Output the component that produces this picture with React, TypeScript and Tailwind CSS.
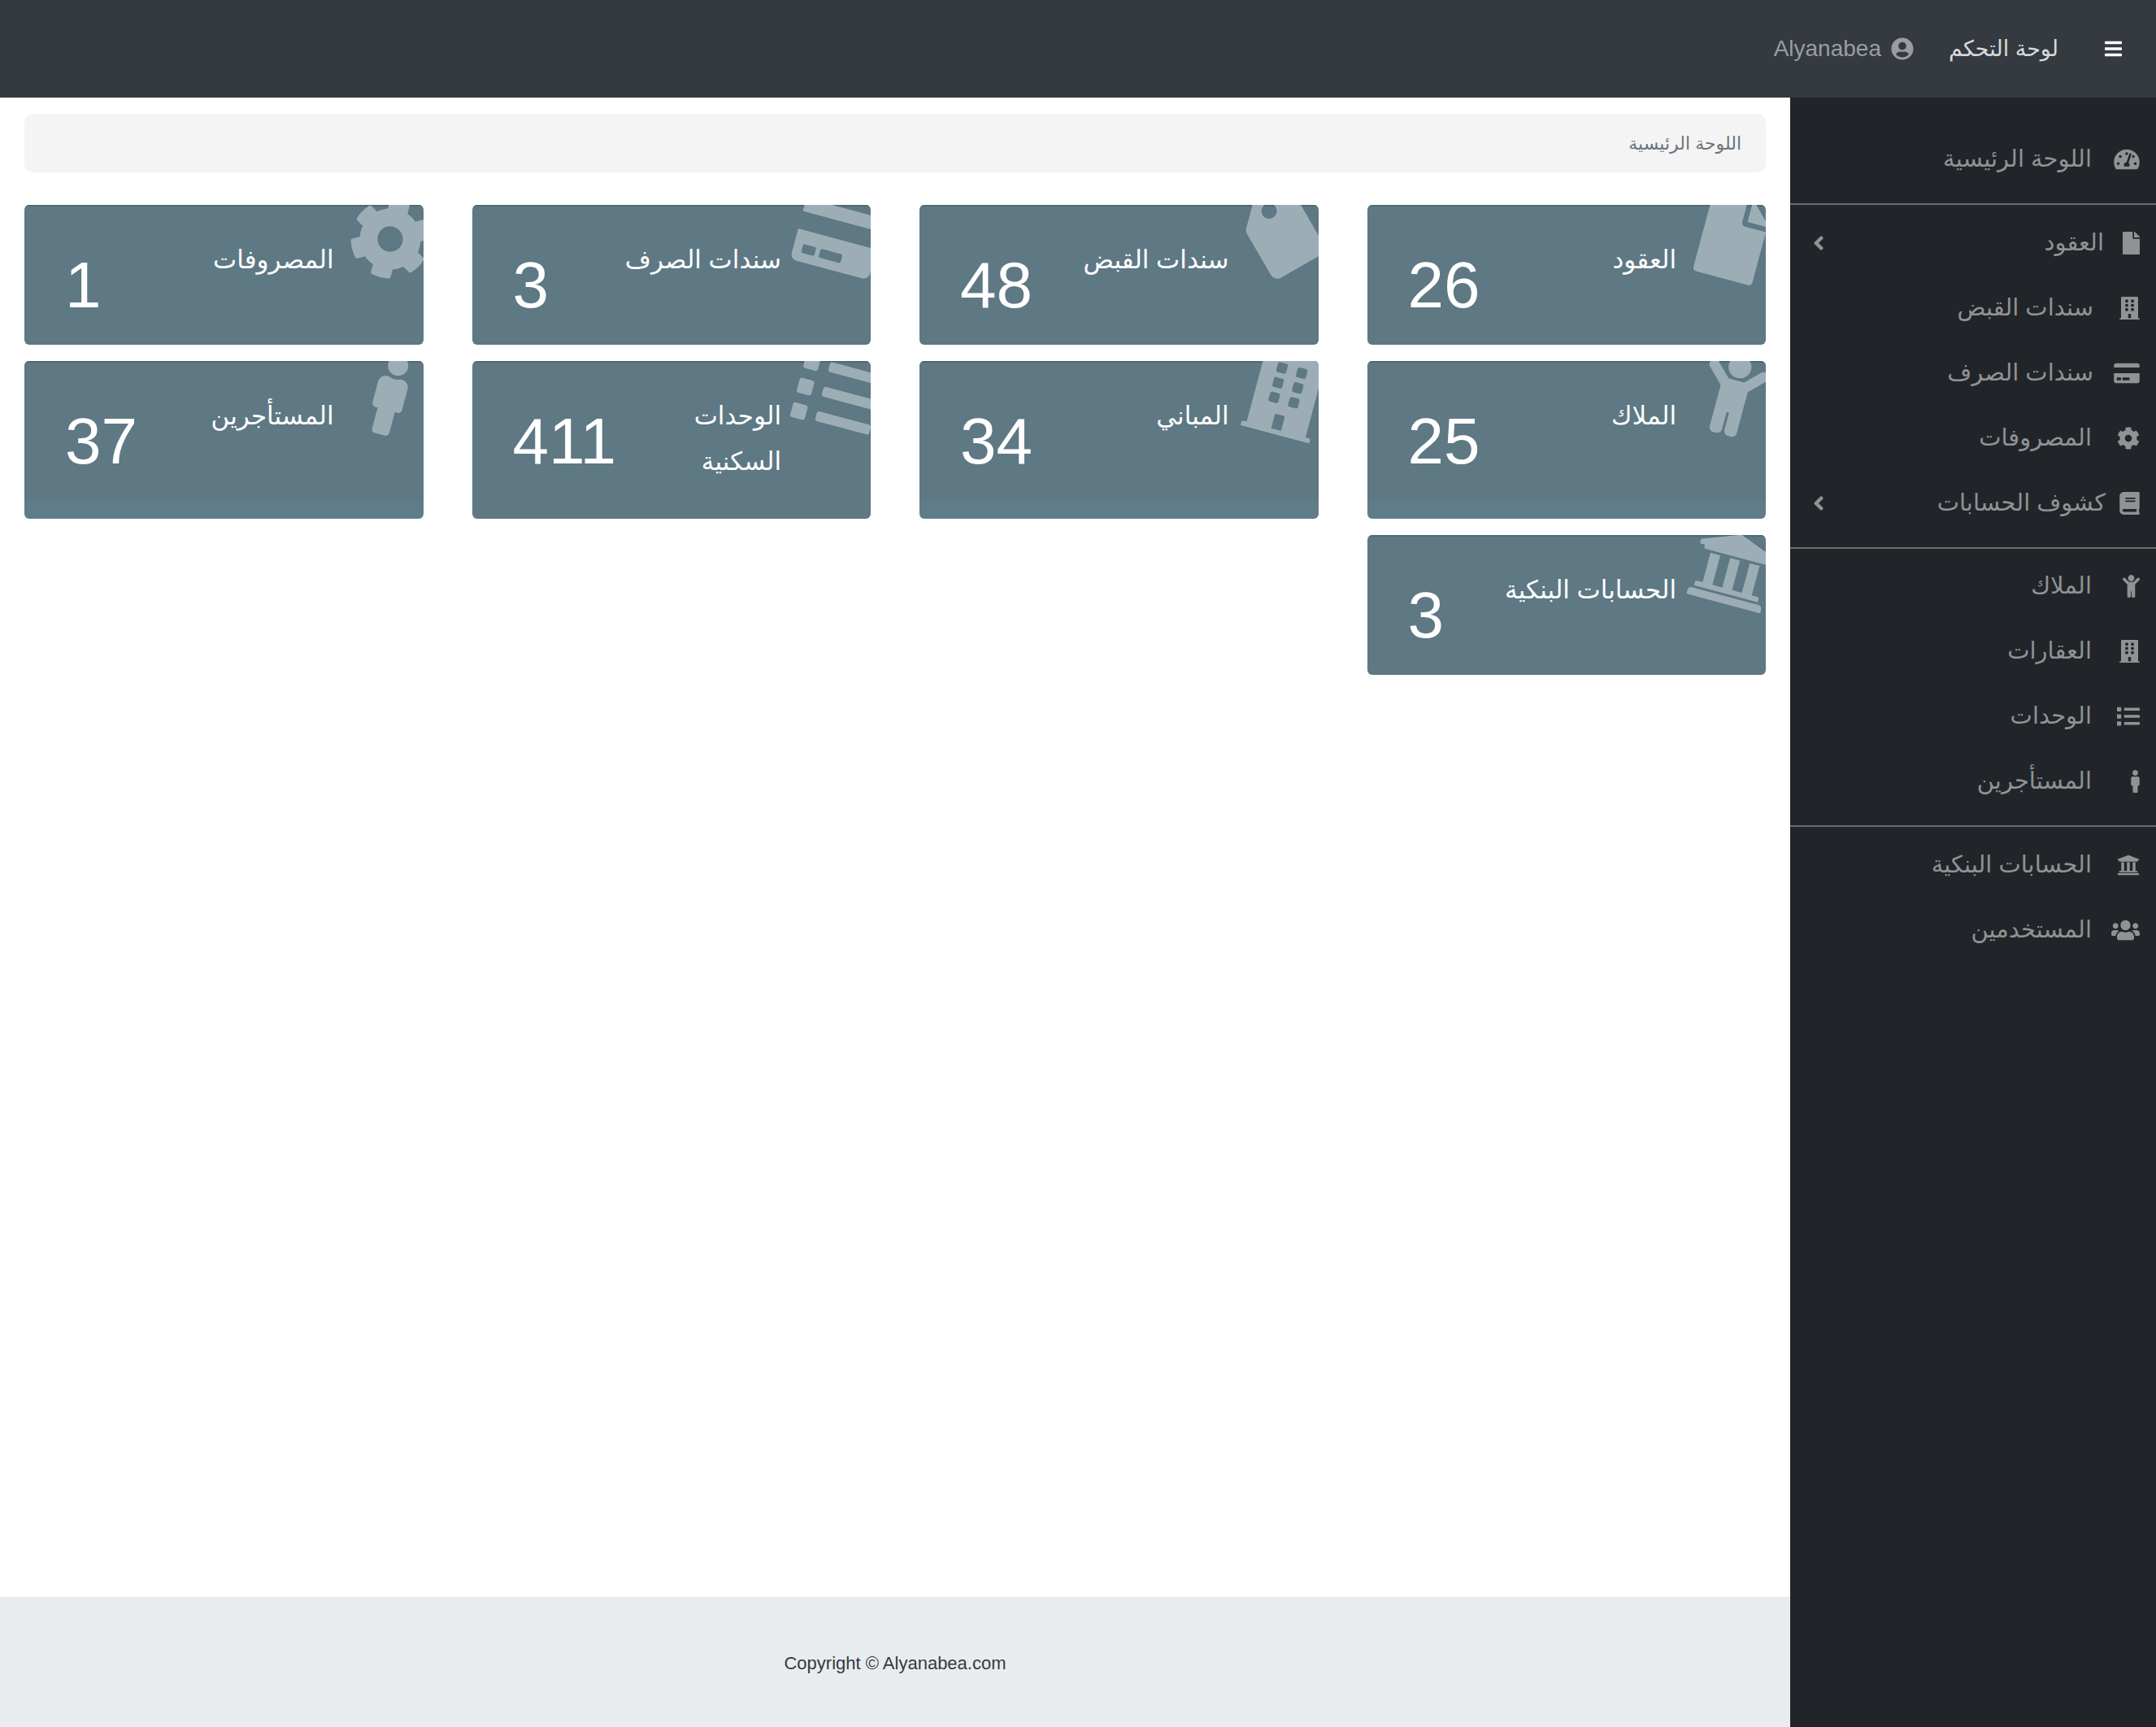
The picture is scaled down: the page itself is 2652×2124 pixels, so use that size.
import React from 'react';
import {
    FaBars, FaUserCircle, FaTachometerAlt, FaFile, FaBuilding, FaCreditCard, FaCog, FaBook,
    FaChild, FaList, FaMale, FaUniversity, FaUsers, FaAngleLeft, FaTag,
} from 'react-icons/fa';
import type { IconType } from 'react-icons';

const sans = 'font-["Liberation_Sans","DejaVu_Sans",sans-serif]';

interface NavItem {
    label: string;
    icon: IconType;
    iconWidth: string;
    slot?: string;
    chevron?: boolean;
}

const navGroups: NavItem[][] = [
    [{ label: 'اللوحة الرئيسية', icon: FaTachometerAlt, iconWidth: 'w-[32px]' }],
    [
        { label: 'العقود', icon: FaFile, iconWidth: 'w-[21px]', slot: 'w-[44px]', chevron: true },
        { label: 'سندات القبض', icon: FaBuilding, iconWidth: 'w-[25px]', slot: 'w-[57px]' },
        { label: 'سندات الصرف', icon: FaCreditCard, iconWidth: 'w-[32px]', slot: 'w-[57px]' },
        { label: 'المصروفات', icon: FaCog, iconWidth: 'w-[28px]' },
        { label: 'كشوف الحسابات', icon: FaBook, iconWidth: 'w-[25px]', slot: 'w-[42px]', chevron: true },
    ],
    [
        { label: 'الملاك', icon: FaChild, iconWidth: 'w-[21px]' },
        { label: 'العقارات', icon: FaBuilding, iconWidth: 'w-[25px]' },
        { label: 'الوحدات', icon: FaList, iconWidth: 'w-[28px]' },
        { label: 'المستأجرين', icon: FaMale, iconWidth: 'w-[11px]' },
    ],
    [
        { label: 'الحسابات البنكية', icon: FaUniversity, iconWidth: 'w-[28px]' },
        { label: 'المستخدمين', icon: FaUsers, iconWidth: 'w-[35px]' },
    ],
];

const cards = [
    { label: 'العقود', value: 26, icon: FaFile },
    { label: 'سندات القبض', value: 48, icon: FaTag },
    { label: 'سندات الصرف', value: 3, icon: FaCreditCard },
    { label: 'المصروفات', value: 1, icon: FaCog },
    { label: 'الملاك', value: 25, icon: FaChild },
    { label: 'المباني', value: 34, icon: FaBuilding },
    { label: 'الوحدات\nالسكنية', value: 411, icon: FaList },
    { label: 'المستأجرين', value: 37, icon: FaMale },
    { label: 'الحسابات البنكية', value: 3, icon: FaUniversity },
];

const StatCard: React.FC<{ label: string; value: number; icon: IconType }> = ({ label, value, icon: Icon }) => (
    <div className="relative overflow-hidden rounded-[6px] bg-[#5f7c89] text-white">
        <div className="flex justify-between border-t-2 border-[#4f6a77] bg-[#5e7884]">
            <div className="relative z-10 whitespace-pre-line pt-[38px] pr-[110px] pb-[42px] text-[31px] leading-[56px]">{label}</div>
            <div className="relative z-10 pt-[57px] pb-[33px] pl-[50px] text-[80px] leading-[80px]">{value}</div>
        </div>
        <Icon className="absolute -top-[8px] -right-[9px] rotate-[15deg] text-[100px] text-[#9cadb5]" />
    </div>
);

export default function App() {
    return (
        <div dir="rtl" className={`flex h-screen flex-col overflow-hidden bg-white ${sans}`}>
            <header className="flex h-[120px] shrink-0 items-center bg-[#343a40] pr-[42px]">
                <FaBars className="h-[24px] w-[21px] text-white" />
                <span className="mr-[57px] text-[27px] text-[#d9dadb]">لوحة التحكم</span>
                <div className="mr-[43px] flex items-center text-[#9a9da0]">
                    <FaUserCircle className="text-[28px]" />
                    <span dir="ltr" className="mr-[12px] text-[28px]">Alyanabea</span>
                </div>
            </header>

            <div className="flex min-h-0 flex-1">
                <aside className="w-[450px] shrink-0 bg-[#212529] pt-[36px] text-[#909294]">
                    {navGroups.map((group, i) => (
                        <div key={i} className={i > 0 ? `mt-[14px] border-t-2 border-[#6a6c6e] ${i === 2 ? 'pt-[6px]' : 'pt-[7px]'}` : ''}>
                            {group.map((item) => (
                                <div key={item.label} className="flex h-[80px] items-center pr-[20px] pl-[28px] text-[29px]">
                                    <div className={`flex shrink-0 items-center ${item.slot ?? 'w-[59px]'}`}>
                                        <item.icon className={`h-[28px] ${item.iconWidth}`} />
                                    </div>
                                    <span>{item.label}</span>
                                    {item.chevron && <FaAngleLeft className="mr-auto h-[28px] w-[14px]" />}
                                </div>
                            ))}
                        </div>
                    ))}
                </aside>

                <main className="flex min-w-0 flex-1 flex-col">
                    <div className="flex-1 px-[30px] pt-[20px]">
                        <div className="flex h-[72px] items-center rounded-[10px] bg-[#f4f4f4] px-[30px] text-[22px] text-[#6c757d]">
                            اللوحة الرئيسية
                        </div>
                        <div className="mt-[40px] grid grid-cols-4 gap-x-[60px] gap-y-[20px]">
                            {cards.map((card) => (
                                <StatCard key={card.label} {...card} />
                            ))}
                        </div>
                    </div>
                    <footer className="flex h-[160px] items-center justify-center bg-[#e9ecef] pt-[2px] text-[22px] text-[#343a40]">
                        <span dir="ltr">Copyright © Alyanabea.com</span>
                    </footer>
                </main>
            </div>
        </div>
    );
}
